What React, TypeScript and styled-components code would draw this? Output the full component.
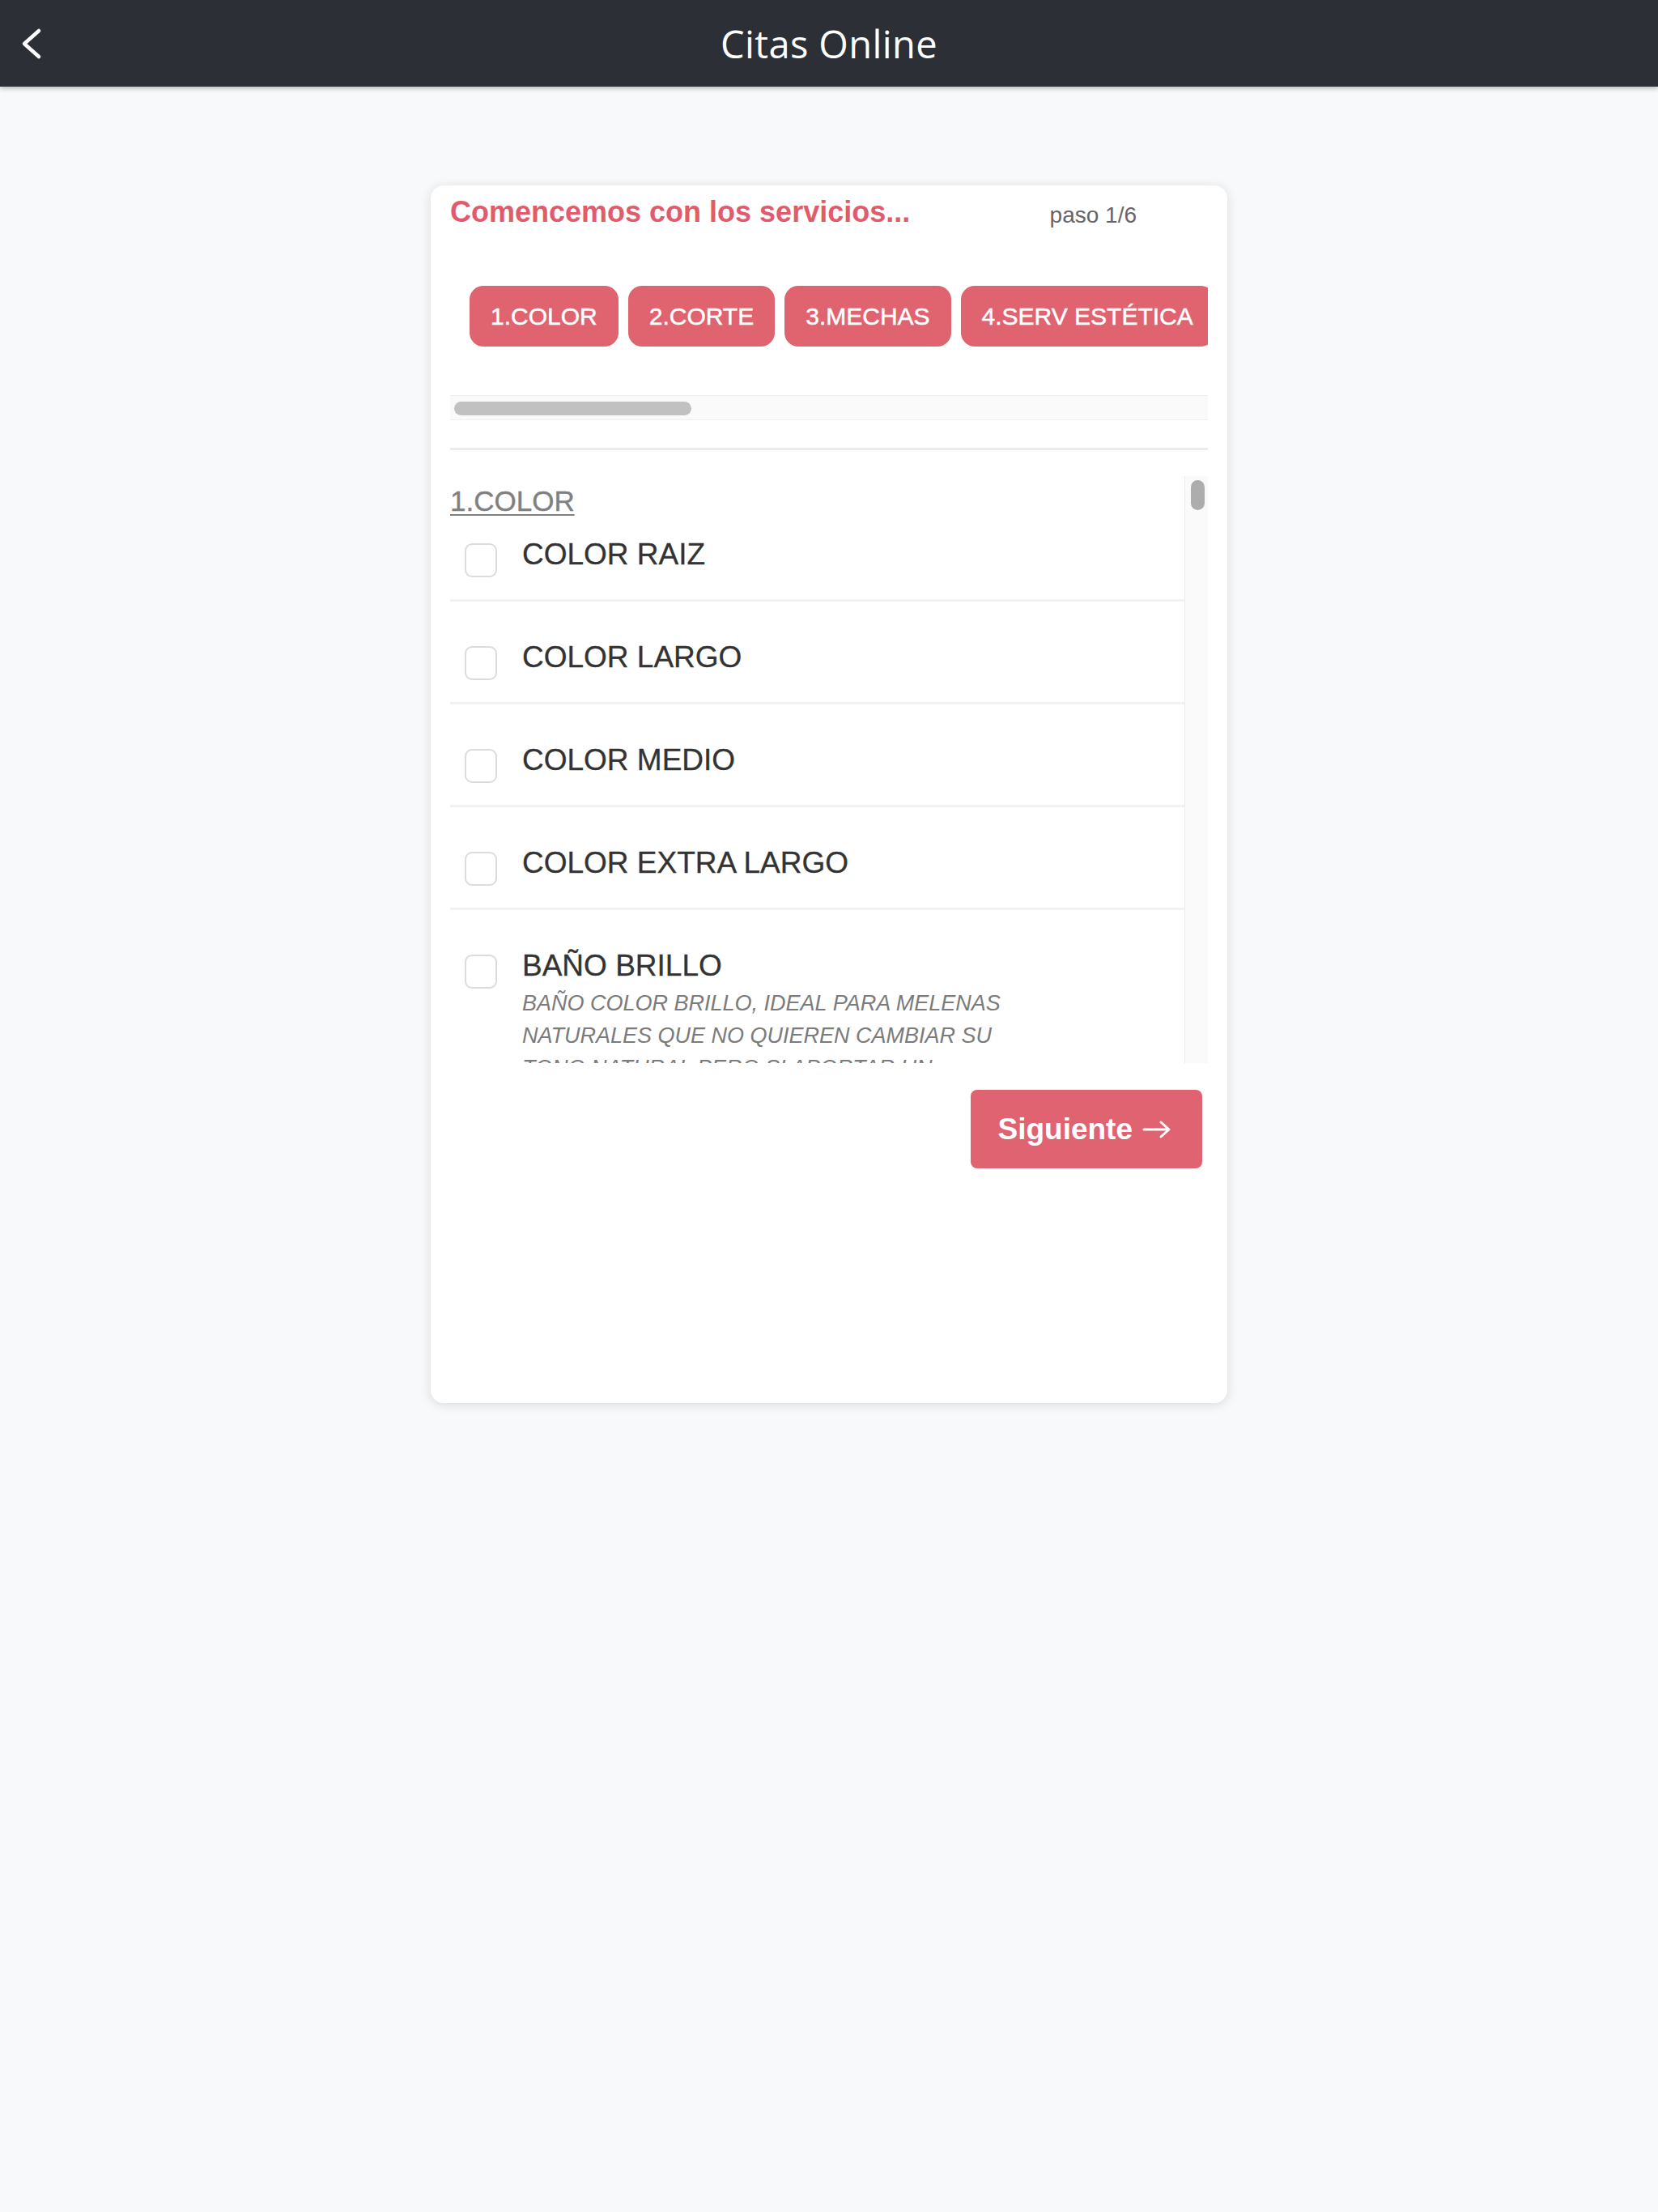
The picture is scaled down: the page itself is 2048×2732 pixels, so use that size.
import styled, { createGlobalStyle } from "styled-components";

const GlobalStyle = createGlobalStyle`
  html, body {
    margin: 0;
    padding: 0;
    background-color: #f8f9fb;
  }

  #root {
    min-height: 2732px;
    font-family: "Liberation Sans", Arial, sans-serif;
  }
`;

const TopBar = styled.header`
  display: grid;
  grid-template-columns: 140px 1fr 140px;
  align-items: center;
  height: 107px;
  background-color: #2c2f36;
  box-shadow: 0 2px 6px rgba(0, 0, 0, 0.28);

  .title {
    text-align: center;
    color: #ffffff;
    font-family: "Open Sans", sans-serif;
    font-weight: 500;
    font-size: 47px;
    letter-spacing: 0.4px;
  }
`;

const BackButton = styled.button`
  display: flex;
  align-items: center;
  padding: 0 0 0 24px;
  height: 106px;
  background: none;
  border: none;
  cursor: pointer;
`;

const Card = styled.main`
  box-sizing: border-box;
  width: 984px;
  height: 1504px;
  margin: 122px auto 0;
  padding: 11px 24px 0;
  background-color: #ffffff;
  border-radius: 16px;
  box-shadow: 0 2px 14px rgba(0, 0, 0, 0.13);
`;

const CardHeader = styled.div`
  display: flex;
  align-items: center;
  justify-content: space-between;

  .heading {
    color: #e05c6d;
    font-weight: 700;
    font-size: 36px;
    line-height: 43px;
  }

  .step {
    color: #666666;
    font-size: 28px;
    margin-top: 8px;
    padding-right: 88px;
  }
`;

const ChipScroller = styled.div`
  margin-top: 70px;
  overflow: hidden;
`;

const ChipTrack = styled.div`
  display: flex;
  gap: 12px;
  padding: 0 24px;
`;

const Chip = styled.button`
  flex: none;
  display: flex;
  align-items: center;
  height: 75px;
  padding: 0 26px;
  border: none;
  border-radius: 17px;
  background-color: #e06370;
  color: #ffffff;
  font-family: "Liberation Sans", Arial, sans-serif;
  font-size: 30px;
  -webkit-text-stroke: 0.5px #ffffff;
  white-space: nowrap;
`;

const HScrollbar = styled.div`
  box-sizing: border-box;
  height: 31px;
  margin-top: 60px;
  padding: 7px 0 0 5px;
  background-color: #fafafa;
  border-top: 1px solid #efefef;
  border-bottom: 1px solid #efefef;
`;

const HThumb = styled.div`
  height: 17px;
  border-radius: 9px;
  background-color: #c1c1c1;
`;

const Divider = styled.hr`
  height: 3px;
  margin: 34px 0 0;
  border: none;
  background-color: #ebebeb;
`;

const ListArea = styled.section`
  display: flex;
  height: 725px;
  margin-top: 32px;
`;

const ListScroll = styled.div`
  flex: 1;
  overflow: hidden;
  padding-top: 10px;
`;

const SectionTitle = styled.div`
  color: #808080;
  font-size: 35px;
  line-height: 42px;
  -webkit-text-stroke: 0.4px #808080;
  text-decoration: underline;
  text-decoration-thickness: 2px;
  text-underline-offset: 4px;
`;

const Row = styled.label<{ first?: boolean }>`
  display: flex;
  align-items: flex-start;
  padding: ${(props) => (props.first ? "23px" : "47px")} 0 33px 18px;
  border-bottom: 3px solid #f2f2f3;

  .name {
    color: #333333;
    font-size: 37px;
    line-height: 44px;
    -webkit-text-stroke: 0.3px #333333;
  }

  .desc {
    max-width: 630px;
    margin-top: 4px;
    color: #7b7b7b;
    font-size: 27px;
    font-style: italic;
    line-height: 40px;
  }
`;

const Checkbox = styled.span`
  box-sizing: border-box;
  flex: none;
  width: 40px;
  height: 42px;
  margin: 8px 31px -6px 0;
  border: 2px solid #dcdcdc;
  border-radius: 9px;
  background-color: #ffffff;
`;

const VScrollbar = styled.div`
  box-sizing: border-box;
  flex: none;
  width: 29px;
  padding: 5px 0 0 7px;
  background-color: #fafafa;
  border-left: 1px solid #ececec;
`;

const VThumb = styled.div`
  width: 17px;
  height: 37px;
  border-radius: 9px;
  background-color: #adadad;
`;

const Footer = styled.div`
  display: flex;
  justify-content: flex-end;
  margin-top: 33px;
  padding-right: 7px;
`;

const NextButton = styled.button`
  display: flex;
  align-items: center;
  gap: 12px;
  height: 97px;
  padding: 0 38px 0 33px;
  border: none;
  border-radius: 8px;
  background-color: #e06372;
  color: #ffffff;
  font-family: "Liberation Sans", Arial, sans-serif;
  font-weight: 700;
  font-size: 37px;
  cursor: pointer;
`;

const steps = ["1.COLOR", "2.CORTE", "3.MECHAS", "4.SERV ESTÉTICA"];

const services = [
  { name: "COLOR RAIZ" },
  { name: "COLOR LARGO" },
  { name: "COLOR MEDIO" },
  { name: "COLOR EXTRA LARGO" },
  {
    name: "BAÑO BRILLO",
    desc: "BAÑO COLOR BRILLO, IDEAL PARA MELENAS NATURALES QUE NO QUIEREN CAMBIAR SU TONO NATURAL PERO SI APORTAR UN",
  },
];

export default function App() {
  return (
    <>
      <GlobalStyle />
      <TopBar>
        <BackButton aria-label="Volver">
          <svg width="30" height="40" viewBox="0 0 30 40" fill="none">
            <polyline
              points="24,4 6,20 24,36"
              stroke="#ffffff"
              strokeWidth="4.5"
              strokeLinecap="round"
              strokeLinejoin="round"
            />
          </svg>
        </BackButton>
        <div className="title">Citas Online</div>
        <div />
      </TopBar>

      <Card>
        <CardHeader>
          <div className="heading">Comencemos con los servicios...</div>
          <div className="step">paso 1/6</div>
        </CardHeader>

        <ChipScroller>
          <ChipTrack>
            {steps.map((step) => (
              <Chip key={step}>{step}</Chip>
            ))}
          </ChipTrack>
        </ChipScroller>
        <HScrollbar>
          <HThumb style={{ width: 293 }} />
        </HScrollbar>

        <Divider />

        <ListArea>
          <ListScroll>
            <SectionTitle>1.COLOR</SectionTitle>
            {services.map((service, i) => (
              <Row key={service.name} first={i === 0}>
                <Checkbox />
                <div>
                  <div className="name">{service.name}</div>
                  {service.desc && <div className="desc">{service.desc}</div>}
                </div>
              </Row>
            ))}
          </ListScroll>
          <VScrollbar>
            <VThumb />
          </VScrollbar>
        </ListArea>

        <Footer>
          <NextButton>
            Siguiente
            <svg width="36" height="26" viewBox="0 0 36 26" fill="none">
              <path
                d="M2 13 H33 M23 4 L33 13 L23 22"
                stroke="#ffffff"
                strokeWidth="3"
                strokeLinecap="round"
                strokeLinejoin="round"
              />
            </svg>
          </NextButton>
        </Footer>
      </Card>
    </>
  );
}
